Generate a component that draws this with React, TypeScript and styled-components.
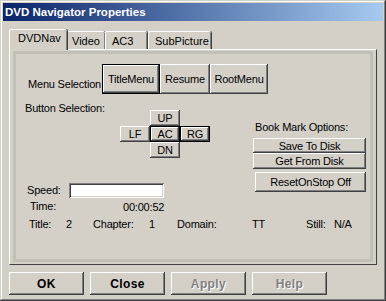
import { Fragment } from "react";
import styled, { createGlobalStyle } from "styled-components";

const GlobalStyle = createGlobalStyle`
  html, body { margin: 0; padding: 0; background: #d4d0c8; }
  body {
    font-family: "Liberation Sans", Arial, sans-serif;
    font-size: 11px;
    letter-spacing: -0.2px;
    color: #000;
    white-space: nowrap;
  }
`;

const Window = styled.div`
  width: 386px;
  height: 301px;
  box-sizing: border-box;
  padding: 3px;
  background: #d4d0c8;
  box-shadow: inset -1px -1px #404040, inset 1px 1px #d4d0c8, inset -2px -2px #808080, inset 2px 2px #fff;
  display: flex;
  flex-direction: column;
`;

const TitleBar = styled.div`
  height: 18px;
  padding-left: 2px;
  display: flex;
  align-items: center;
  background: linear-gradient(to right, #0a246a, #a6caf0);
  color: #fff;
  letter-spacing: 0;
  font: bold 11.5px "Liberation Sans", Arial, sans-serif;
`;

const TabRow = styled.div`
  height: 28px;
  padding-left: 8px;
  display: flex;
  align-items: flex-end;
`;

const Tab = styled.div<{ $w: number; $active?: boolean; $gap?: number }>`
  position: relative;
  z-index: ${p => (p.$active ? 2 : 1)};
  box-sizing: border-box;
  width: ${p => p.$w + (p.$active ? 4 : 0)}px;
  height: ${p => (p.$active ? 21 : 18)}px;
  margin: 0 ${p => (p.$active ? -2 : 0) + (p.$gap || 0)}px ${p => (p.$active ? -1 : 0)}px ${p => (p.$active ? -2 : 0)}px;
  padding: ${p => (p.$active ? "2px 0 0 8px" : "3px 0 0 6px")};
  line-height: 13px;
  letter-spacing: 0;
  background: #d4d0c8;
  border-top: 1px solid #fff;
  border-left: 1px solid #fff;
  border-radius: 2px 2px 0 0;
  box-shadow: inset -1px 0 #808080, 1px 0 #404040;
`;

const Panel = styled.div`
  margin-left: 6px;
  width: 368px;
  height: 216px;
  box-sizing: border-box;
  border-top: 1px solid #fff;
  border-left: 1px solid #fff;
  border-right: 1px solid #404040;
  border-bottom: 1px solid #404040;
  padding: 1px 3px 2px 3px;
`;

const Page = styled.div`
  height: 100%;
  box-sizing: border-box;
  border: 3px solid #c2bfb8;
  display: flex;
  flex-direction: column;
`;

const Btn = styled.button<{ $w: number; $h: number; $default?: boolean }>`
  flex-shrink: 0;
  width: ${p => p.$w}px;
  height: ${p => p.$h}px;
  box-sizing: border-box;
  margin: 0;
  padding: 0;
  font: 11px "Liberation Sans", Arial, sans-serif;
  letter-spacing: -0.2px;
  color: #000;
  white-space: nowrap;
  background: #d4d0c8;
  border: ${p => (p.$default ? "1px solid #000" : "none")};
  box-shadow: inset -1px -1px #404040, inset 1px 1px #fff, inset -2px -2px #808080, inset 2px 2px #d4d0c8;
`;

const MenuRow = styled.div`
  margin-top: 10px;
  padding-left: 12px;
  display: flex;
  height: 30px;
`;

const MenuLabel = styled.span`
  flex-shrink: 0;
  align-self: flex-end;
  margin-bottom: 3px;
  width: 74px;
  line-height: 13px;
`;

const MidRow = styled.div`
  margin-top: 8px;
  display: flex;
  align-items: flex-start;
`;

const LeftCol = styled.div`
  display: flex;
  flex-direction: column;
`;

const SelectRow = styled.div`
  display: flex;
  align-items: flex-start;
`;

const SelectLabel = styled.span`
  width: 104px;
  padding-left: 9px;
  box-sizing: border-box;
  line-height: 13px;
`;

const Dpad = styled.div`
  margin-top: 8px;
  display: grid;
  grid-template-columns: repeat(3, 30px);
  grid-template-rows: repeat(3, 16px);
  grid-template-areas: ". up ." "lf ac rg" ". dn .";
`;

const PadBtn = styled(Btn)<{ $area: string }>`
  grid-area: ${p => p.$area};
  line-height: 12px;
`;

const SpeedRow = styled.div`
  margin-top: 25px;
  padding-left: 11px;
  display: flex;
  align-items: center;
`;

const FieldLabel = styled.span<{ $w: number }>`
  width: ${p => p.$w}px;
  line-height: 13px;
`;

const EditBox = styled.input`
  width: 95px;
  height: 15px;
  box-sizing: border-box;
  margin: 0;
  border: none;
  background: #fff;
  box-shadow: inset 1px 1px #808080, inset -1px -1px #fff, inset 2px 2px #404040, inset -2px -2px #d4d0c8;
`;

const TimeRow = styled.div`
  margin-top: 2px;
  padding-left: 14px;
  display: flex;
  line-height: 13px;
`;

const TimeValue = styled.span`
  padding-top: 1px;
`;

const RightCol = styled.div`
  margin-left: 43px;
  margin-top: 19px;
  display: flex;
  flex-direction: column;
  align-items: flex-start;
`;

const BookLabel = styled.span`
  padding-left: 2px;
  line-height: 13px;
  margin-bottom: 4px;
`;

const ResetBtn = styled(Btn)`
  margin: 3px 0 0 2px;
`;

const StatusRow = styled.div`
  margin-top: 4px;
  padding-left: 13px;
  display: grid;
  grid-template-columns: 37px 27px 56px 28px 75px 54px 28px auto;
  line-height: 13px;
`;

const ButtonBar = styled.div`
  margin-top: 7px;
  padding-left: 6px;
  display: flex;
  gap: 6px;
`;

const DlgBtn = styled(Btn)<{ $disabled?: boolean }>`
  font: bold 12px "Liberation Sans", Arial, sans-serif;
  letter-spacing: 0.4px;
  color: ${p => (p.$disabled ? "#808080" : "#000")};
  text-shadow: ${p => (p.$disabled ? "1px 1px #fff" : "none")};
`;

const status = [
  ["Title:", "2"],
  ["Chapter:", "1"],
  ["Domain:", "TT"],
  ["Still:", "N/A"],
];

export default function App() {
  return (
    <Window>
      <GlobalStyle />
      <TitleBar>DVD Navigator Properties</TitleBar>
      <TabRow>
        <Tab $w={54} $active>DVDNav</Tab>
        <Tab $w={40}>Video</Tab>
        <Tab $w={42} $gap={1}>AC3</Tab>
        <Tab $w={63}>SubPicture</Tab>
      </TabRow>
      <Panel>
        <Page>
          <MenuRow>
            <MenuLabel>Menu Selection</MenuLabel>
            <Btn $w={58} $h={30} $default>TitleMenu</Btn>
            <Btn $w={50} $h={30}>Resume</Btn>
            <Btn $w={58} $h={30}>RootMenu</Btn>
          </MenuRow>
          <MidRow>
            <LeftCol>
              <SelectRow>
                <SelectLabel>Button Selection:</SelectLabel>
                <Dpad>
                  <PadBtn $area="up" $w={30} $h={16}>UP</PadBtn>
                  <PadBtn $area="lf" $w={30} $h={16}>LF</PadBtn>
                  <PadBtn $area="ac" $w={30} $h={16} $default>AC</PadBtn>
                  <PadBtn $area="rg" $w={30} $h={16} $default>RG</PadBtn>
                  <PadBtn $area="dn" $w={30} $h={16}>DN</PadBtn>
                </Dpad>
              </SelectRow>
              <SpeedRow>
                <FieldLabel $w={42}>Speed:</FieldLabel>
                <EditBox />
              </SpeedRow>
              <TimeRow>
                <FieldLabel $w={93}>Time:</FieldLabel>
                <TimeValue>00:00:52</TimeValue>
              </TimeRow>
            </LeftCol>
            <RightCol>
              <BookLabel>Book Mark Options:</BookLabel>
              <Btn $w={113} $h={15}>Save To Disk</Btn>
              <Btn $w={113} $h={16}>Get From Disk</Btn>
              <ResetBtn $w={111} $h={20}>ResetOnStop Off</ResetBtn>
            </RightCol>
          </MidRow>
          <StatusRow>
            {status.map(([k, v]) => (
              <Fragment key={k}>
                <span>{k}</span>
                <span>{v}</span>
              </Fragment>
            ))}
          </StatusRow>
        </Page>
      </Panel>
      <ButtonBar>
        <DlgBtn $w={75} $h={23}>OK</DlgBtn>
        <DlgBtn $w={75} $h={23}>Close</DlgBtn>
        <DlgBtn $w={75} $h={23} $disabled>Apply</DlgBtn>
        <DlgBtn $w={75} $h={23} $disabled>Help</DlgBtn>
      </ButtonBar>
    </Window>
  );
}
